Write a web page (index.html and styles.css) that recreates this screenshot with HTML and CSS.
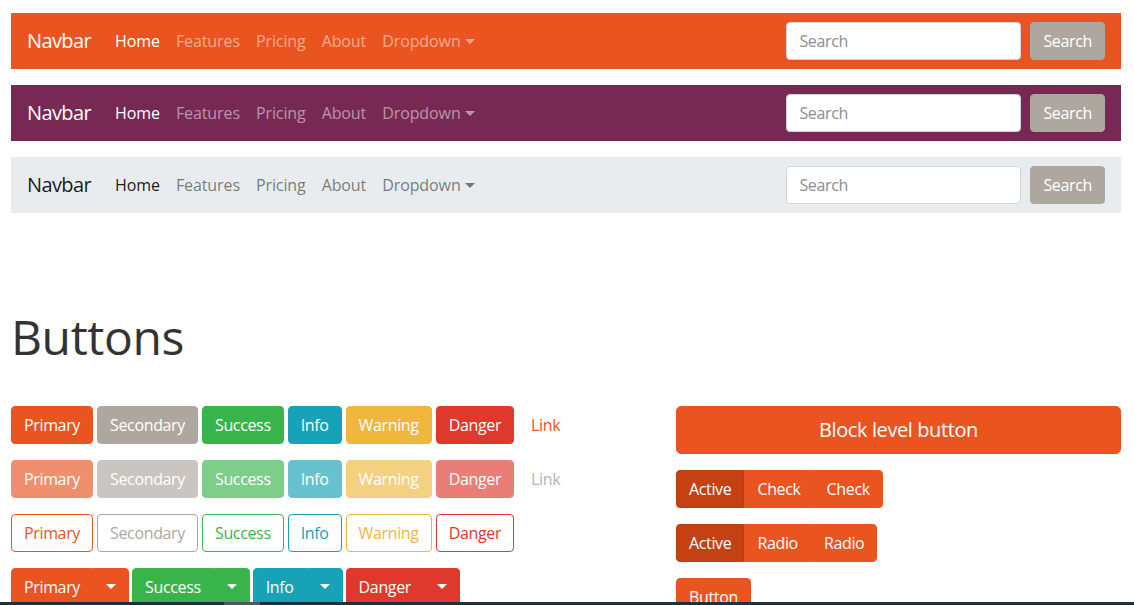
FILE: index.html
```html
<!DOCTYPE html>
<html lang="en">
<head>
<meta charset="utf-8">
<title>United – Buttons</title>
<link rel="stylesheet" href="styles.css">
</head>
<body>
<div class="page">
  <nav class="navbar navbar-primary">
    <a class="brand" href="#">Navbar</a>
    <ul class="nav">
      <li><a class="nav-link active" href="#">Home</a></li>
      <li><a class="nav-link" href="#">Features</a></li>
      <li><a class="nav-link" href="#">Pricing</a></li>
      <li><a class="nav-link" href="#">About</a></li>
      <li><a class="nav-link" href="#">Dropdown<span class="caret"></span></a></li>
    </ul>
    <form class="search">
      <input class="search-input" type="text" placeholder="Search">
      <button class="btn btn-secondary" type="button">Search</button>
    </form>
  </nav>

  <nav class="navbar navbar-dark">
    <a class="brand" href="#">Navbar</a>
    <ul class="nav">
      <li><a class="nav-link active" href="#">Home</a></li>
      <li><a class="nav-link" href="#">Features</a></li>
      <li><a class="nav-link" href="#">Pricing</a></li>
      <li><a class="nav-link" href="#">About</a></li>
      <li><a class="nav-link" href="#">Dropdown<span class="caret"></span></a></li>
    </ul>
    <form class="search">
      <input class="search-input" type="text" placeholder="Search">
      <button class="btn btn-secondary" type="button">Search</button>
    </form>
  </nav>

  <nav class="navbar navbar-light">
    <a class="brand" href="#">Navbar</a>
    <ul class="nav">
      <li><a class="nav-link active" href="#">Home</a></li>
      <li><a class="nav-link" href="#">Features</a></li>
      <li><a class="nav-link" href="#">Pricing</a></li>
      <li><a class="nav-link" href="#">About</a></li>
      <li><a class="nav-link" href="#">Dropdown<span class="caret"></span></a></li>
    </ul>
    <form class="search">
      <input class="search-input" type="text" placeholder="Search">
      <button class="btn btn-secondary" type="button">Search</button>
    </form>
  </nav>

  <section class="section">
    <h1 class="title">Buttons</h1>
    <div class="row">
      <div class="col-left">
        <div class="btn-row">
          <button class="btn btn-primary" type="button">Primary</button>
          <button class="btn btn-secondary" type="button">Secondary</button>
          <button class="btn btn-success" type="button">Success</button>
          <button class="btn btn-info" type="button">Info</button>
          <button class="btn btn-warning" type="button">Warning</button>
          <button class="btn btn-danger" type="button">Danger</button>
          <button class="btn btn-link" type="button">Link</button>
        </div>
        <div class="btn-row">
          <button class="btn btn-primary disabled" type="button">Primary</button>
          <button class="btn btn-secondary disabled" type="button">Secondary</button>
          <button class="btn btn-success disabled" type="button">Success</button>
          <button class="btn btn-info disabled" type="button">Info</button>
          <button class="btn btn-warning disabled" type="button">Warning</button>
          <button class="btn btn-danger disabled" type="button">Danger</button>
          <button class="btn btn-link disabled" type="button">Link</button>
        </div>
        <div class="btn-row">
          <button class="btn btn-outline-primary" type="button">Primary</button>
          <button class="btn btn-outline-secondary" type="button">Secondary</button>
          <button class="btn btn-outline-success" type="button">Success</button>
          <button class="btn btn-outline-info" type="button">Info</button>
          <button class="btn btn-outline-warning" type="button">Warning</button>
          <button class="btn btn-outline-danger" type="button">Danger</button>
        </div>
        <div class="btn-row dropdown-row">
          <div class="btn-group">
            <button class="btn btn-primary" type="button">Primary</button>
            <button class="btn btn-primary split" type="button"><span class="caret"></span></button>
          </div>
          <div class="btn-group">
            <button class="btn btn-success" type="button">Success</button>
            <button class="btn btn-success split" type="button"><span class="caret"></span></button>
          </div>
          <div class="btn-group">
            <button class="btn btn-info" type="button">Info</button>
            <button class="btn btn-info split" type="button"><span class="caret"></span></button>
          </div>
          <div class="btn-group">
            <button class="btn btn-danger" type="button">Danger</button>
            <button class="btn btn-danger split" type="button"><span class="caret"></span></button>
          </div>
        </div>
      </div>
      <div class="col-right">
        <button class="btn btn-primary btn-lg btn-block" type="button">Block level button</button>
        <div class="btn-group toggle-group">
          <button class="btn btn-primary active" type="button">Active</button>
          <button class="btn btn-primary" type="button">Check</button>
          <button class="btn btn-primary" type="button">Check</button>
        </div>
        <div class="btn-group toggle-group">
          <button class="btn btn-primary active" type="button">Active</button>
          <button class="btn btn-primary" type="button">Radio</button>
          <button class="btn btn-primary" type="button">Radio</button>
        </div>
        <div class="btn-group">
          <button class="btn btn-primary" type="button">Button</button>
        </div>
      </div>
    </div>
  </section>
</div>
<div class="scrollbar"><div class="scrollbar-thumb"></div></div>
</body>
</html>
```
FILE: styles.css
```css
* { box-sizing: border-box; }

html, body {
  margin: 0;
  height: 100%;
  overflow: hidden;
}

body {
  font-family: "Open Sans", "Noto Sans", "DejaVu Sans", sans-serif;
  font-size: 16px;
  line-height: 1.5;
  letter-spacing: -0.35px;
  color: #333333;
  background: #ffffff;
}

.page {
  margin: 13px 13px 0 11px;
  width: 1110px;
}

/* ---------- Navbars ---------- */
.navbar {
  display: flex;
  align-items: center;
  height: 56px;
  padding: 8px 16px;
  margin-bottom: 16px;
}

.brand {
  font-size: 20px;
  line-height: 30px;
  letter-spacing: -0.6px;
  margin-right: 16px;
  text-decoration: none;
  white-space: nowrap;
}

.nav {
  display: flex;
  list-style: none;
  margin: 0;
  padding: 0;
}

.nav-link {
  display: flex;
  align-items: center;
  padding: 8px;
  letter-spacing: -0.1px;
  text-decoration: none;
  white-space: nowrap;
}

.caret {
  display: inline-block;
  width: 0;
  height: 0;
  margin-left: 4px;
  border-top: 5px solid currentColor;
  border-left: 5px solid transparent;
  border-right: 5px solid transparent;
}

.navbar-primary { background: #e95420; }
.navbar-dark { background: #772953; }
.navbar-light { background: #e9ecef; }

.navbar-primary .brand,
.navbar-dark .brand,
.navbar-primary .nav-link.active,
.navbar-dark .nav-link.active { color: #ffffff; }

.navbar-primary .nav-link,
.navbar-dark .nav-link { color: rgba(255, 255, 255, 0.5); }

.navbar-light .brand,
.navbar-light .nav-link.active { color: rgba(0, 0, 0, 0.9); }
.navbar-light .nav-link { color: rgba(0, 0, 0, 0.5); }

.search {
  display: flex;
  align-items: center;
  margin: 0 0 0 auto;
}

.search-input {
  width: 235px;
  height: 38px;
  padding: 6px 12px;
  margin-right: 9px;
  font: inherit;
  letter-spacing: inherit;
  color: #495057;
  background: #ffffff;
  border: 1px solid #ced4da;
  border-radius: 4px;
}

.search-input::placeholder { color: #868e96; }

/* ---------- Section ---------- */
.section { margin-top: 95px; }

.title {
  margin: 0 0 40px;
  font-size: 48px;
  font-weight: 400;
  line-height: 1.2;
  letter-spacing: -0.4px;
  color: #333333;
}

.row {
  display: grid;
  grid-template-columns: 635px 445px;
  column-gap: 30px;
}

.btn-row {
  display: flex;
  gap: 4px;
  margin-bottom: 16px;
}

.dropdown-row { gap: 3px; }

.col-right {
  display: flex;
  flex-direction: column;
  align-items: flex-start;
  gap: 16px;
}

/* ---------- Buttons ---------- */
.btn {
  display: inline-block;
  font-family: inherit;
  font-size: 16px;
  line-height: 24px;
  letter-spacing: inherit;
  padding: 6px 12px;
  border: 1px solid transparent;
  border-radius: 4px;
  color: #ffffff;
  background: transparent;
  white-space: nowrap;
  cursor: pointer;
}

.btn-primary { background: #e95420; border-color: #e95420; }
.btn-secondary { background: #aea79f; border-color: #aea79f; }
.btn-success { background: #38b44a; border-color: #38b44a; }
.btn-info { background: #17a2b8; border-color: #17a2b8; }
.btn-warning { background: #efb73e; border-color: #efb73e; }
.btn-danger { background: #df382c; border-color: #df382c; }
.btn-link { color: #e95420; }

.btn.disabled { opacity: 0.65; }
.btn-link.disabled { color: #868e96; }

.btn-outline-primary { color: #e95420; border-color: #e95420; }
.btn-outline-secondary { color: #aea79f; border-color: #aea79f; }
.btn-outline-success { color: #38b44a; border-color: #38b44a; }
.btn-outline-info { color: #17a2b8; border-color: #17a2b8; }
.btn-outline-warning { color: #efb73e; border-color: #efb73e; }
.btn-outline-danger { color: #df382c; border-color: #df382c; }

.btn-group { display: inline-flex; }
.btn-group .btn + .btn { border-top-left-radius: 0; border-bottom-left-radius: 0; }
.btn-group .btn:not(:last-child) { border-top-right-radius: 0; border-bottom-right-radius: 0; }

.split { padding-left: 12px; padding-right: 12px; display: inline-flex; align-items: center; }
.split .caret { margin-left: 0; }

.btn-lg {
  font-size: 20px;
  line-height: 30px;
  letter-spacing: -0.4px;
  padding: 8px 16px;
  border-radius: 5px;
}

.btn-block { width: 100%; }

.btn-primary.active {
  background: #c34113;
  border-color: #b83d12;
}

/* ---------- Bottom scrollbar ---------- */
.scrollbar {
  position: fixed;
  left: 0;
  right: 0;
  bottom: 0;
  height: 3px;
  background: #1f313a;
}

.scrollbar-thumb {
  margin-left: 224px;
  width: 36px;
  height: 3px;
  background: #4b5961;
}
```
